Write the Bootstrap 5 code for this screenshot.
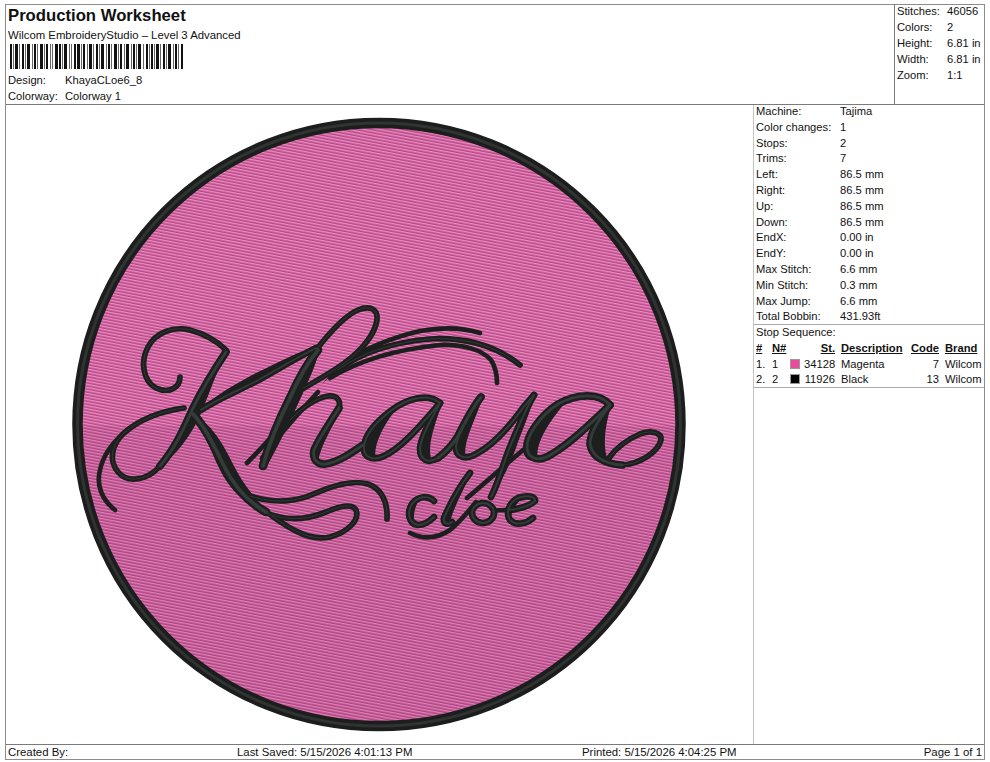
<!doctype html>
<html lang="en">
<head>
    <meta charset="utf-8">
    <title>Production Worksheet</title>
    <link href="https://cdn.jsdelivr.net/npm/bootstrap@5.3.0/dist/css/bootstrap.min.css" rel="stylesheet">
    <style>
        body { background: #fff; color: #111; font-family: "Liberation Sans", Arial, sans-serif; font-size: 11.2px; line-height: 15.8px; }
        .sheet { width: 980px; height: 756px; margin: 4px 0 0 5px; border: 1px solid #8c8c8c; }
        .top { height: 100px; border-bottom: 1px solid #7a7a7a; }
        .title { font-size: 16.7px; font-weight: 700; line-height: 20px; padding: 1px 0 0 2px; }
        .subtitle { font-size: 11.35px; line-height: 18px; padding-left: 2px; }
        .barcode { display: block; margin: 0 0 4px 4px; }
        .meta { padding-left: 2px; }
        .meta span:first-child { display: inline-block; width: 57px; }
        .summary { width: 90px; border-left: 1px solid #7a7a7a; padding-left: 2px; margin-top: -1px; }
        .summary div { height: 16px; }
        .summary span:first-child { display: inline-block; width: 50px; }
        .main { height: 639px; }
        .art { width: 748px; border-right: 1px solid #c4c4c4; }
        .art svg { display: block; }
        .side { width: 231px; }
        .props { padding-left: 2px; border-bottom: 1px solid #a8a8a8; height: 221px; margin-top: -1px; }
        .props span:first-child { display: inline-block; width: 84px; }
        .stops { border-bottom: 1px solid #a8a8a8; height: 63px; padding-left: 2px; }
        .stops table { width: 228px; table-layout: fixed; border-collapse: collapse; }
        .stops th, .stops td { padding: 0; line-height: 15.8px; white-space: nowrap; }
        .stops th { text-decoration: underline; font-weight: 700; }
        .stops .sep { padding-left: 6px; }
        .swatch { display: inline-block; width: 10px; height: 10px; vertical-align: -1px; border: 1px solid #999; }
        .pink { background: #ea4a9c; }
        .black { background: #000; }
        .foot { height: 15px; border-top: 1px solid #7a7a7a; font-size: 11.4px; line-height: 15px; padding: 0 2px; }
        .foot .by { width: 229px; }
        .foot .saved { width: 345px; }
        .ink { stroke: #1c1f1e; --add: 2.2px; }
        .sheen { stroke: #333c39; --add: -2.6px; }
        .lens { fill: #1c1f1e; }
        #lettering { fill: none; stroke-linecap: round; stroke-linejoin: round; }
        .s2 { stroke-width: calc(2.5px + var(--add)); }
        .s3 { stroke-width: calc(3.5px + var(--add)); }
        .s4 { stroke-width: calc(4.5px + var(--add)); }
        .s5 { stroke-width: calc(5.5px + var(--add)); }
        .s6 { stroke-width: calc(6.5px + var(--add)); }
    </style>
</head>
<body>
    <div class="sheet d-flex flex-column">
        <div class="top d-flex">
            <div class="flex-grow-1">
                <div class="title">Production Worksheet</div>
                <div class="subtitle">Wilcom EmbroideryStudio – Level 3 Advanced</div>
                <svg class="barcode" id="barcode" width="173" height="25" viewBox="0 0 173 25"></svg>
                <div class="meta"><span>Design:</span><span>KhayaCLoe6_8</span></div>
                <div class="meta"><span>Colorway:</span><span>Colorway 1</span></div>
            </div>
            <div class="summary">
                <div><span>Stitches:</span><span>46056</span></div>
                <div><span>Colors:</span><span>2</span></div>
                <div><span>Height:</span><span>6.81 in</span></div>
                <div><span>Width:</span><span>6.81 in</span></div>
                <div><span>Zoom:</span><span>1:1</span></div>
            </div>
        </div>
        <div class="main d-flex">
            <div class="art">
                <svg width="747" height="639" viewBox="6 105 747 639" role="img" aria-label="Khaya cloe embroidered patch">
                    <defs>
                        <pattern id="stitch" width="7" height="3" patternUnits="userSpaceOnUse" patternTransform="rotate(11)">
                            <rect width="7" height="3" fill="#d4609f"/>
                            <rect y="0" width="7" height="1" fill="#e88fc0"/>
                            <rect y="2" width="7" height="1" fill="#b54a88"/>
                        </pattern>
                        <g id="lettering">
                            <!-- K -->
                            <path class="s3" d="M180 377C180 388 168 394 156 388C143 381 140 362 148 347C156 332 174 326 190 330C205 334 218 342 226 350"/>
                            <path class="s5" d="M226 352C214 370 203 388 193 408C184 428 176 447 160 466"/>
                            <path class="s3" d="M160 466C148 480 128 484 118 472C108 460 112 444 124 433C140 419 162 411 184 408"/>
                            <path class="s2" d="M115 510C102 500 96 485 100 470C103 456 112 443 125 432"/>
                            <path class="s4" d="M201 410C222 396 245 388 262 378C278 369 296 358 316 348"/>
                            <path class="s6" d="M193 414C206 428 214 446 224 466C234 486 248 502 266 512"/>
                            <path class="s3" d="M262 511C286 522 306 520 326 512C340 506 352 503 356 510C360 520 348 532 330 537C312 541 294 532 272 516"/>
                            <path class="s3" d="M250 496C276 504 296 502 316 493C334 485 354 480 368 484C380 488 388 500 387 519"/>
                            <!-- h -->
                            <path class="s6" d="M263 466C270 440 280 418 290 398C298 380 308 362 318 350"/>
                            <path class="s3" d="M316 350C330 332 344 316 358 310C370 305 378 309 377 320C375 334 362 350 346 362C332 372 318 380 304 388"/>
                            <path class="s2" d="M247 463C260 450 270 438 280 428C292 416 302 408 312 402"/>
                            <path class="s2" d="M262 458C278 436 296 416 318 392"/>
                            <path class="s3" d="M290 420C302 408 316 398 328 396C338 395 342 402 338 410"/>
                            <path class="s5" d="M339 408C332 420 320 436 314 450C312 460 318 465 326 464C338 462 350 454 363 445"/>
                            <!-- top flourishes -->
                            <path class="s2" d="M345 362C362 350 390 338 420 331C442 327 464 328 480 333"/>
                            <path class="s3" d="M338 370C362 352 396 342 430 339C466 337 496 346 520 365"/>
                            <path class="s2" d="M330 378C360 360 400 349 440 345C464 344 482 350 491 360C496 368 497 376 497 383"/>
                            <!-- first a -->
                            <path class="s4" d="M440 403C428 393 408 398 392 410C376 422 364 436 364 448C364 458 374 461 384 456C402 448 422 424 440 403"/>
                            <path class="s4" d="M440 403C432 418 422 434 420 448C420 460 428 464 438 458"/>
                            <!-- y -->
                            <path class="s5" d="M438 458C446 452 452 446 458 436C464 424 472 408 481 397"/>
                            <path class="s4" d="M481 397C470 414 458 434 456 446C456 458 466 460 476 454C492 446 508 428 520 412C524 406 530 400 534 395"/>
                            <path class="s4" d="M534 395C524 412 516 432 508 452C502 468 498 484 491 497"/>
                            <path class="s2" d="M467 498C486 482 506 464 528 446"/>
                            <!-- last a -->
                            <path class="s5" d="M610 405C600 393 578 393 558 404C540 416 526 436 527 448C528 460 540 462 552 454C572 442 592 422 610 405"/>
                            <path class="s5" d="M610 405C600 418 590 432 590 444C592 456 604 464 622 465"/>
                            <path class="s3" d="M622 465C640 464 658 452 661 440C662 432 650 430 640 434C626 440 616 448 609 458"/>
                            <!-- cloe -->
                            <path class="s4" d="M434 501C428 495 418 496 412 504C406 514 410 524 418 525C424 525 430 521 434 517"/>
                            <path class="s4" d="M470 473C460 486 450 504 444 518C443 524 448 525 452 522"/>
                            <path class="s2" d="M410 533C424 540 438 538 450 530C460 522 468 512 476 502"/>
                            <ellipse class="s4" cx="483" cy="513" rx="11" ry="10"/>
                            <path class="s2" d="M494 511C498 510 502 510 508 510"/>
                            <path class="s4" d="M508 510C516 510 530 506 535 501C536 496 526 495 518 498C508 503 506 514 510 520C516 526 526 524 533 518"/>
                        </g>
                        <clipPath id="lower"><rect x="70" y="426" width="620" height="310"/></clipPath>
                    </defs>
                    <circle cx="379" cy="424.5" r="301.5" fill="url(#stitch)"/>
                    <circle cx="379" cy="424.5" r="301.5" fill="#5a1a4a" opacity=".09" clip-path="url(#lower)"/>
                    <circle cx="379" cy="424.5" r="301.5" fill="none" stroke="#1c1e1d" stroke-width="10.5"/>
                    <circle cx="379" cy="424.5" r="301.5" fill="none" stroke="#2f3432" stroke-width="3"/>
                    <use href="#lettering" class="ink"/>
                    <!-- swelling of the satin downstrokes -->
                    <g class="lens">
                        <path d="M226 352C212 372 196 396 187 416C178 436 170 452 160 466C176 456 190 436 199 418C206 402 216 374 226 352Z"/>
                        <path d="M193 414C204 430 210 450 220 470C230 490 246 506 268 514C256 498 244 486 234 466C224 446 214 426 193 414Z"/>
                        <path d="M201 410C230 388 262 380 290 362C300 356 308 350 316 348C300 350 280 362 258 372C236 384 216 394 201 410Z"/>
                        <path d="M260 468C266 440 278 412 288 394C298 376 308 360 320 348C316 366 306 386 298 404C288 426 276 450 266 468Z"/>
                        <path d="M341 404C332 416 316 436 311 452C310 460 314 463 318 463C320 444 336 424 341 404Z"/>
                        <path d="M322 384C345 362 372 350 410 340C375 344 345 356 322 384Z"/>
                        <path d="M290 503C310 500 330 486 368 482C340 482 320 494 290 503Z"/>
                        <path d="M404 400C384 410 364 432 361 448C360 458 368 462 376 460C372 444 386 420 404 400Z"/>
                        <path d="M442 402C430 416 418 436 417 448C416 460 424 464 432 462C426 444 436 424 442 402Z"/>
                        <path d="M483 396C470 410 456 432 453 446C452 458 460 460 466 458C462 442 476 420 483 396Z"/>
                        <path d="M535 393C522 410 514 430 506 450C500 466 496 478 490 498C502 482 510 464 516 448C522 430 530 414 535 393Z"/>
                        <path d="M570 397C548 406 526 430 523 447C522 458 530 462 538 460C534 442 552 418 570 397Z"/>
                        <path d="M612 403C600 416 588 432 587 444C588 458 598 464 610 465C602 450 604 428 612 403Z"/>
                        <path d="M412 501C406 510 405 522 416 527C412 518 414 508 420 498Z"/>
                        <path d="M471 472C460 486 448 504 441 518C440 524 446 526 450 522C454 506 464 490 471 472Z"/>
                        <path d="M516 498C506 504 504 516 510 524C510 514 514 506 522 498Z"/>
                    </g>
                    <use href="#lettering" class="sheen"/>
                </svg>
            </div>
            <div class="side">
                <div class="props">
                    <div><span>Machine:</span><span>Tajima</span></div>
                    <div><span>Color changes:</span><span>1</span></div>
                    <div><span>Stops:</span><span>2</span></div>
                    <div><span>Trims:</span><span>7</span></div>
                    <div><span>Left:</span><span>86.5 mm</span></div>
                    <div><span>Right:</span><span>86.5 mm</span></div>
                    <div><span>Up:</span><span>86.5 mm</span></div>
                    <div><span>Down:</span><span>86.5 mm</span></div>
                    <div><span>EndX:</span><span>0.00 in</span></div>
                    <div><span>EndY:</span><span>0.00 in</span></div>
                    <div><span>Max Stitch:</span><span>6.6 mm</span></div>
                    <div><span>Min Stitch:</span><span>0.3 mm</span></div>
                    <div><span>Max Jump:</span><span>6.6 mm</span></div>
                    <div><span>Total Bobbin:</span><span>431.93ft</span></div>
                </div>
                <div class="stops">
                    <div>Stop Sequence:</div>
                    <table>
                        <colgroup><col width="16"><col width="18"><col width="14"><col width="31"><col width="70"><col width="34"><col width="45"></colgroup>
                        <tr><th>#</th><th>N#</th><th></th><th class="text-end">St.</th><th class="sep">Description</th><th class="text-end">Code</th><th class="sep">Brand</th></tr>
                        <tr><td>1.</td><td>1</td><td><span class="swatch pink"></span></td><td class="text-end">34128</td><td class="sep">Magenta</td><td class="text-end">7</td><td class="sep">Wilcom</td></tr>
                        <tr><td>2.</td><td>2</td><td><span class="swatch black"></span></td><td class="text-end">11926</td><td class="sep">Black</td><td class="text-end">13</td><td class="sep">Wilcom</td></tr>
                    </table>
                </div>
            </div>
        </div>
        <div class="foot d-flex">
            <span class="by">Created By:</span>
            <span class="saved">Last Saved: 5/15/2026 4:01:13 PM</span>
            <span>Printed: 5/15/2026 4:04:25 PM</span>
            <span class="ms-auto">Page 1 of 1</span>
        </div>
    </div>
    <script src="https://cdn.jsdelivr.net/npm/bootstrap@5.3.0/dist/js/bootstrap.bundle.min.js"></script>
    <script>
    // barcode: bar and gap widths, left to right
    var widths = [2,1,1,1,3,1,1,2,2,1,1,1,3,2,1,1,2,1,1,2,3,1,1,1,2,2,1,1,1,2,3,1,2,1,1,1,3,2,1,1,1,2,2,1,3,1,1,1,2,2,1,1,3,1,1,2,2,1,1,1,3,2,1,1,2,1,1,2,3,1,1,1,2,2,1,1,3,2,1,1,2,1,1,1,3,2,1,2,2,1,1,1];
    var svg = document.getElementById("barcode"), x = 0, out = "";
    while (x < 172) {
        for (var i = 0; i < widths.length && x < 172; i++) {
            if (i % 2 === 0) out += '<rect x="' + x + '" width="' + widths[i] + '" height="25" fill="' + (widths[i] === 1 ? "#666" : "#111") + '"/>';
            x += widths[i];
        }
    }
    svg.innerHTML = out;
    </script>
</body>
</html>
